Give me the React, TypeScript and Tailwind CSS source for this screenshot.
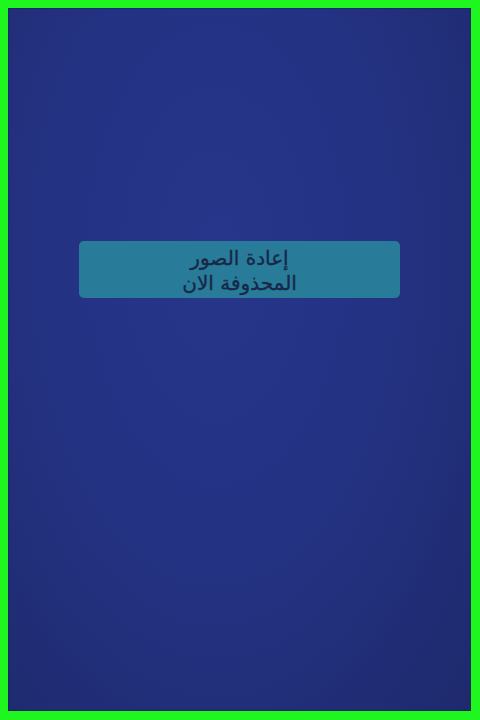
import React from "react";

export default function App() {
  return (
    <div className="w-[480px] h-[720px] bg-[#1ff51f] pt-[8px] pl-[8px] pr-[9px] pb-[9px]">
      <div className="w-full h-full bg-[radial-gradient(ellipse_at_45%_35%,#27368a_0%,#243284_45%,#1e2a6c_100%)] shadow-[inset_0_0_2px_#0c1545] flex flex-col items-center pt-[233px]">
        <div
          dir="rtl"
          className="w-[321px] h-[57px] rounded-[5px] bg-[#297c99] flex flex-col items-center justify-center pt-[3px] text-[#172848] text-[20px] leading-[25px] [-webkit-text-stroke:0.35px_#172848]"
          style={{ fontFamily: '"DejaVu Sans", "Noto Sans", sans-serif' }}
        >
          <span>إعادة الصور</span>
          <span>المحذوفة الان</span>
        </div>
      </div>
    </div>
  );
}
